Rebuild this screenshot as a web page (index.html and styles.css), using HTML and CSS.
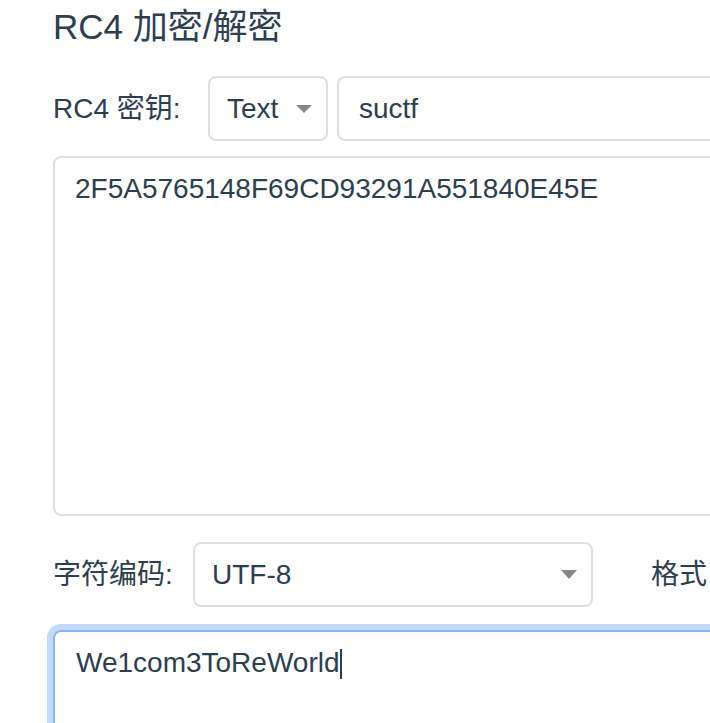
FILE: index.html
```html
<!DOCTYPE html>
<html lang="zh-CN">
<head>
<meta charset="utf-8">
<title>RC4 加密/解密</title>
<link rel="stylesheet" href="styles.css">
</head>
<body>
<div class="page">
  <h3 class="title">RC4 加密/解密</h3>
  <div class="row row-key">
    <label class="label label-key">RC4 密钥:</label>
    <div class="select select-type">
      <span class="select-value">Text</span>
      <svg class="arrow" width="16" height="8" viewBox="0 0 16 8"><polygon points="0,0 16,0 8,8" fill="#888888"/></svg>
    </div>
    <div class="input">suctf</div>
  </div>
  <div class="textarea">2F5A5765148F69CD93291A551840E45E</div>
  <div class="row row-enc">
    <label class="label label-enc">字符编码:</label>
    <div class="select select-enc">
      <span class="select-value">UTF-8</span>
      <svg class="arrow" width="16" height="9" viewBox="0 0 16 9"><polygon points="0,0 16,0 8,9" fill="#888888"/></svg>
    </div>
    <label class="label label-fmt">格式</label>
  </div>
  <div class="textarea focused">We1com3ToReWorld<span class="caret"></span></div>
</div>
</body>
</html>
```

FILE: styles.css
```css
html, body {
  margin: 0;
  padding: 0;
  overflow: hidden;
  background: #ffffff;
}

body {
  width: 710px;
  height: 723px;
  font-family: "Liberation Sans", "Noto Sans CJK SC", sans-serif;
  color: #2c3e50;
}

.page {
  padding-left: 53px;
  width: 900px;
}

.title {
  margin: 7px 0 0;
  font-size: 35px;
  line-height: 40px;
  font-weight: normal;
}

.row {
  display: flex;
  align-items: center;
  height: 65px;
  font-size: 28px;
}

.row-key {
  margin-top: 29px;
}

.row-enc {
  margin-top: 26px;
}

.label {
  line-height: 65px;
  white-space: nowrap;
}

.label-key {
  width: 155px;
}

.label-enc {
  width: 140px;
}

.label-fmt {
  margin-left: 58px;
}

.select {
  box-sizing: border-box;
  height: 65px;
  border: 2px solid #dcdfe6;
  border-radius: 8px;
  display: flex;
  align-items: center;
  justify-content: space-between;
  padding: 0 14px 0 17px;
  line-height: 61px;
}

.select-type {
  width: 120px;
}

.select-enc {
  width: 400px;
}

.arrow {
  display: block;
}

.input {
  box-sizing: border-box;
  margin-left: 9px;
  width: 500px;
  height: 65px;
  border: 2px solid #dcdfe6;
  border-radius: 8px;
  padding: 0 20px;
  line-height: 61px;
}

.textarea {
  box-sizing: border-box;
  width: 800px;
  height: 360px;
  margin-top: 15px;
  border: 2px solid #dcdfe6;
  border-radius: 8px;
  padding: 10px 20px;
  font-size: 28px;
  line-height: 42px;
}

.textarea.focused {
  margin-top: 23px;
  border-color: #8ab4f8;
  box-shadow: 0 0 0 6px #c2dafc;
  padding-left: 21px;
}

.caret {
  display: inline-block;
  width: 2px;
  height: 30px;
  margin-left: 0;
  vertical-align: -7px;
  background: #2c3e50;
}
```
